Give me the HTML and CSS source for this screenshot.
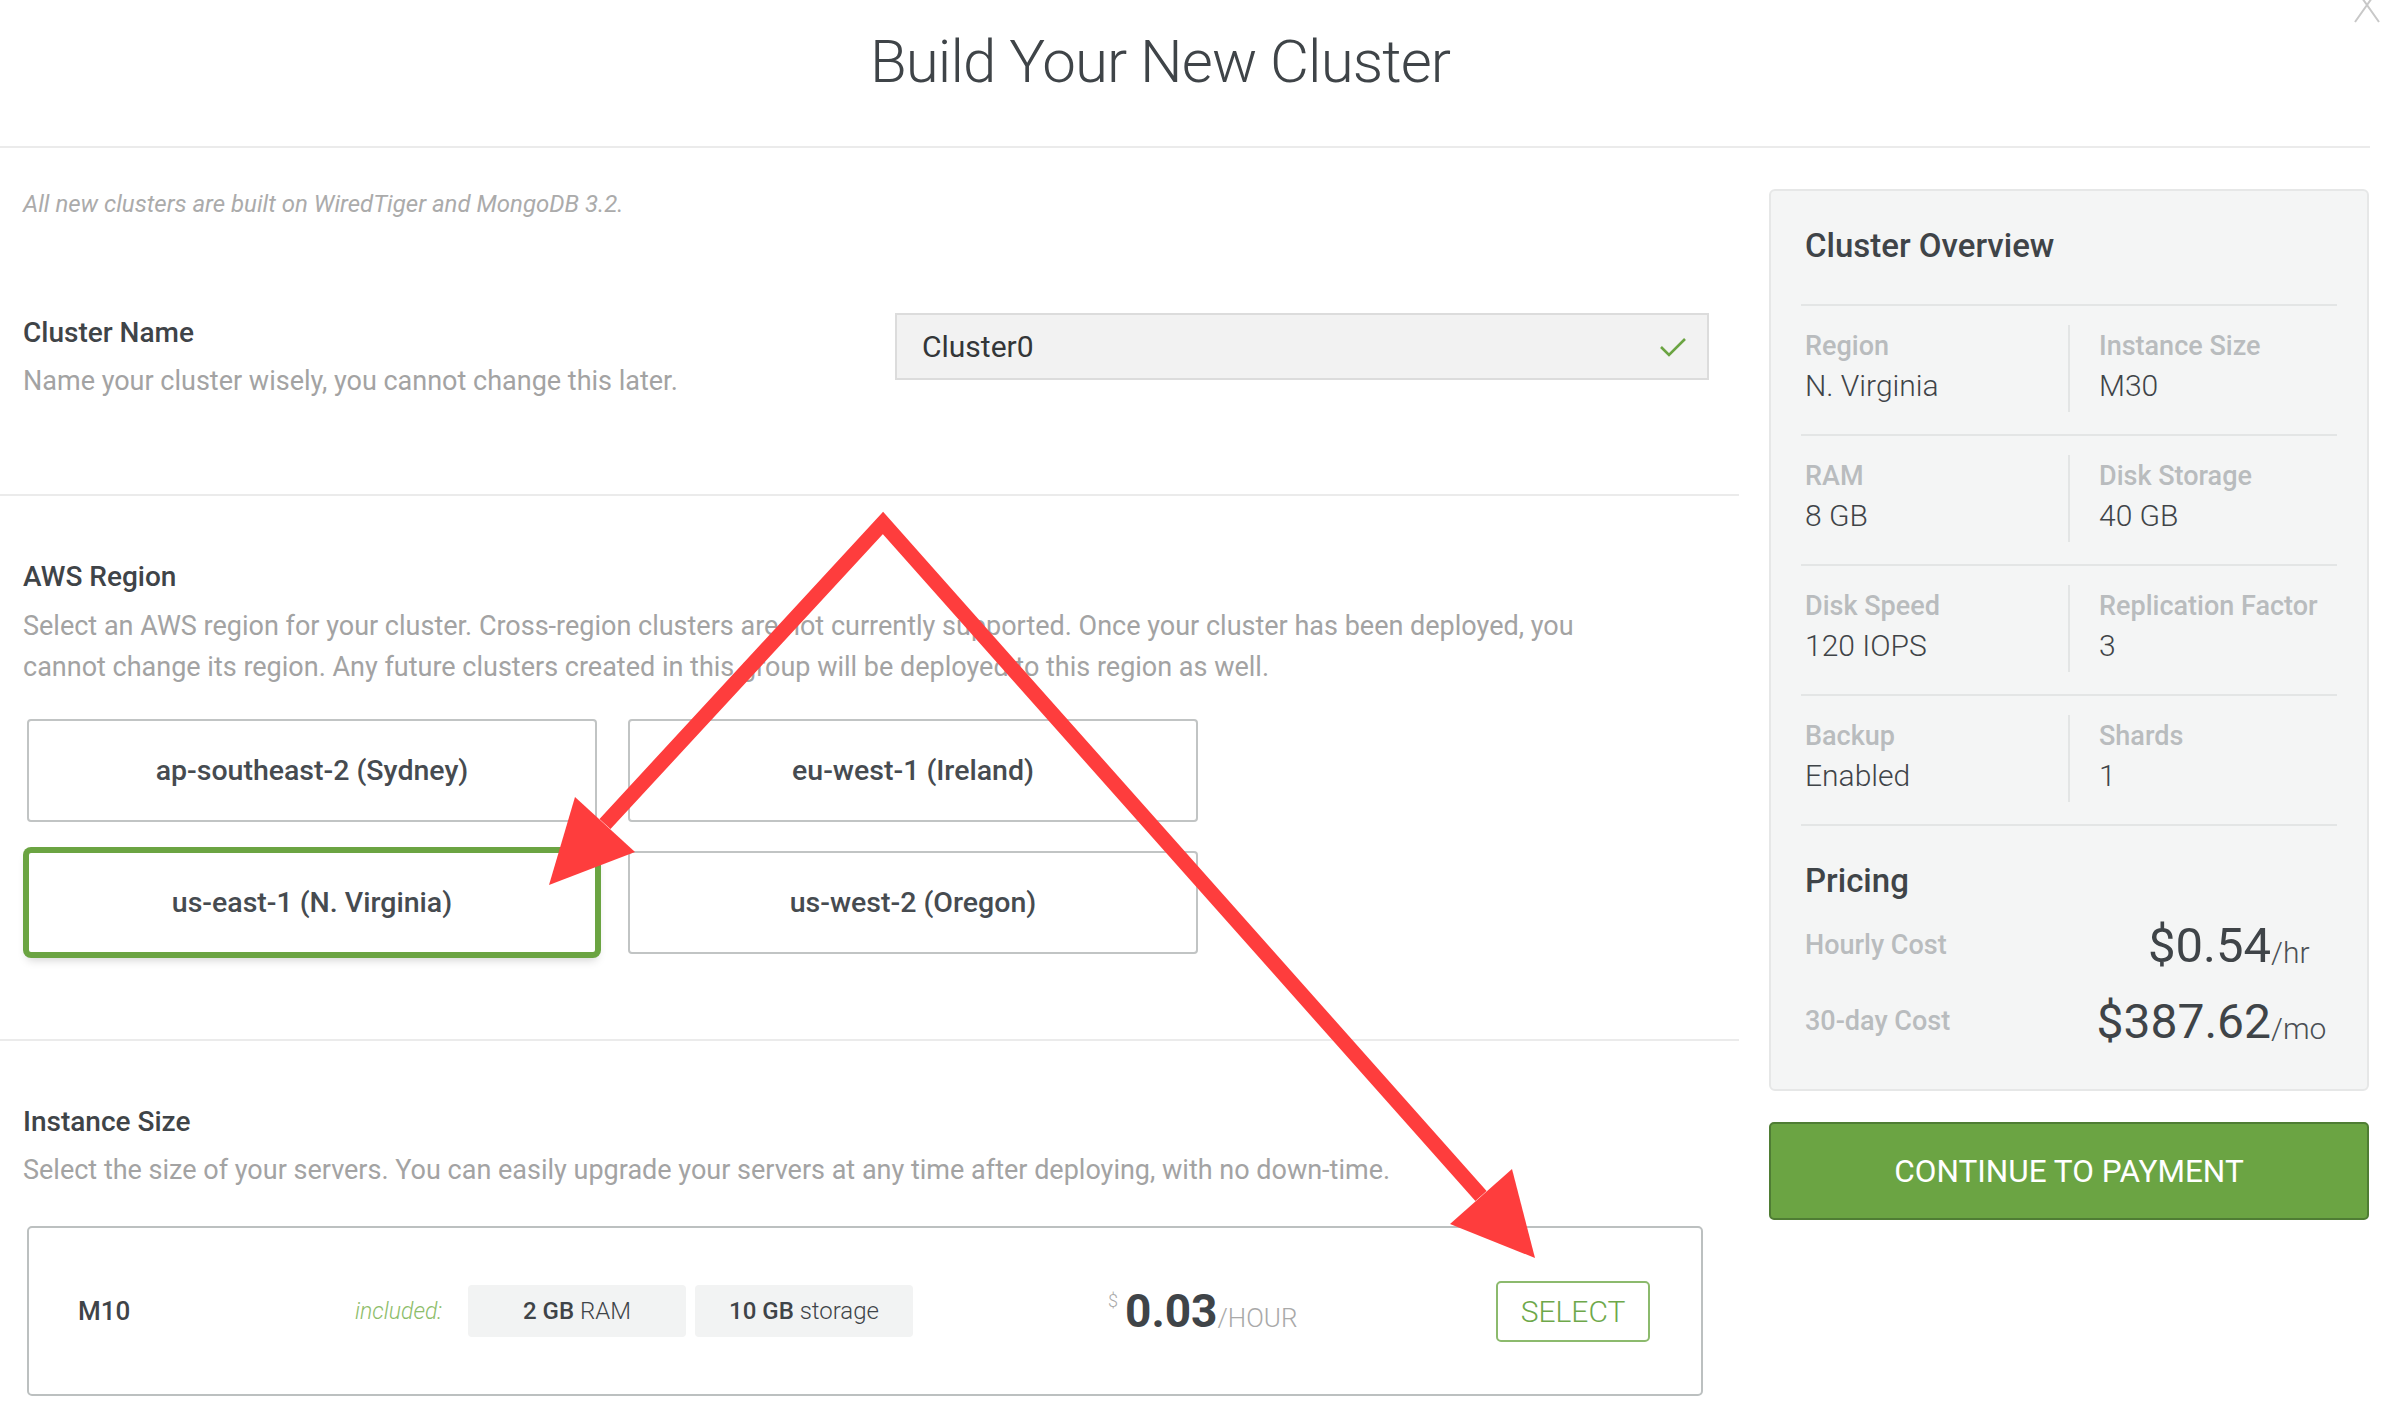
FILE: index.html
```html
<!DOCTYPE html>
<html lang="en">
<head>
<meta charset="utf-8">
<title>Build Your New Cluster</title>
<link rel="stylesheet" href="styles.css">
</head>
<body>
<div class="page">
  <header class="header">
    <h1 class="title">Build Your New Cluster</h1>
  </header>

  <div class="main">
    <div class="left">
      <section class="sec sec-name">
        <p class="note">All new clusters are built on WiredTiger and MongoDB 3.2.</p>
        <div class="name-row">
          <div class="name-text">
            <h2 class="sec-title first">Cluster Name</h2>
            <p class="sec-desc">Name your cluster wisely, you cannot change this later.</p>
          </div>
          <div class="name-input">
            <span class="name-value">Cluster0</span>
            <svg class="check" width="28" height="20" viewBox="0 0 28 20"><path d="M2 10 L10 18 L26 2" fill="none" stroke="#6ba442" stroke-width="2.6"/></svg>
          </div>
        </div>
      </section>

      <section class="sec sec-region">
        <h2 class="sec-title">AWS Region</h2>
        <p class="sec-desc">Select an AWS region for your cluster. Cross-region clusters are not currently supported. Once your cluster has been deployed, you<br>cannot change its region. Any future clusters created in this group will be deployed to this region as well.</p>
        <div class="regions">
          <div class="region">ap-southeast-2 (Sydney)</div>
          <div class="region">eu-west-1 (Ireland)</div>
          <div class="region selected">us-east-1 (N. Virginia)</div>
          <div class="region">us-west-2 (Oregon)</div>
        </div>
      </section>

      <section class="sec sec-size">
        <h2 class="sec-title">Instance Size</h2>
        <p class="sec-desc">Select the size of your servers. You can easily upgrade your servers at any time after deploying, with no down-time.</p>
        <div class="instance">
          <div class="inst-name">M10</div>
          <div class="inst-included">included:</div>
          <div class="pill"><b>2 GB</b>&nbsp;RAM</div>
          <div class="pill"><b>10 GB</b>&nbsp;storage</div>
          <div class="inst-price"><span class="cur">$</span><span class="amt">0.03</span><span class="per">/HOUR</span></div>
          <button class="select-btn">SELECT</button>
        </div>
      </section>
    </div>

    <aside class="right">
      <div class="panel">
        <h3 class="panel-title">Cluster Overview</h3>
        <div class="ov-row">
          <div class="ov-cell"><div class="ov-label">Region</div><div class="ov-value">N. Virginia</div></div>
          <div class="ov-cell second"><div class="ov-label">Instance Size</div><div class="ov-value">M30</div></div>
        </div>
        <div class="ov-row">
          <div class="ov-cell"><div class="ov-label">RAM</div><div class="ov-value">8 GB</div></div>
          <div class="ov-cell second"><div class="ov-label">Disk Storage</div><div class="ov-value">40 GB</div></div>
        </div>
        <div class="ov-row">
          <div class="ov-cell"><div class="ov-label">Disk Speed</div><div class="ov-value">120 IOPS</div></div>
          <div class="ov-cell second"><div class="ov-label">Replication Factor</div><div class="ov-value">3</div></div>
        </div>
        <div class="ov-row">
          <div class="ov-cell"><div class="ov-label">Backup</div><div class="ov-value">Enabled</div></div>
          <div class="ov-cell second"><div class="ov-label">Shards</div><div class="ov-value">1</div></div>
        </div>
        <div class="pricing">
          <h3 class="panel-title">Pricing</h3>
          <div class="price-row">
            <div class="price-label">Hourly Cost</div>
            <div class="price-num hr">$0.54</div>
            <div class="price-unit">/hr</div>
          </div>
          <div class="price-row">
            <div class="price-label">30-day Cost</div>
            <div class="price-num mo">$387.62</div>
            <div class="price-unit">/mo</div>
          </div>
        </div>
      </div>
      <button class="continue-btn">CONTINUE TO PAYMENT</button>
    </aside>
  </div>

  <svg class="close" width="30" height="36" viewBox="0 0 30 36"><path d="M3 0 L27 34 M27 0 L3 34" stroke="#c8c8c8" stroke-width="2" fill="none"/></svg>

  <svg class="arrows" width="2389" height="1405" viewBox="0 0 2389 1405">
    <polyline points="605,824 883,523 1481,1196" fill="none" stroke="#fe3d3d" stroke-width="15" stroke-linejoin="miter"/>
    <polygon points="549,885 575,797 635,852" fill="#fe3d3d"/>
    <polygon points="1535,1258 1512,1169 1450,1224" fill="#fe3d3d"/>
  </svg>
</div>
</body>
</html>
```

FILE: styles.css
```css
* {
  box-sizing: border-box;
  margin: 0;
  padding: 0;
}

body {
  margin: 0;
  background: #ffffff;
  font-family: Roboto, "Liberation Sans", Arial, sans-serif;
  color: #3f4448;
}

.page {
  position: relative;
  width: 2389px;
  height: 1405px;
  overflow: hidden;
}

/* Header */
.header {
  width: 2370px;
  height: 148px;
  border-bottom: 2px solid #ebebeb;
}

.title {
  width: 2320px;
  padding-top: 26px;
  text-align: center;
  font-weight: 300;
  font-size: 60px;
  line-height: 72px;
  letter-spacing: -0.9px;
  color: #3f4448;
}

.main {
  display: flex;
  gap: 30px;
}

/* Left column */
.left {
  width: 1739px;
}

.sec {
  padding-left: 23px;
  border-bottom: 2px solid #ebebeb;
}

.sec-size {
  border-bottom: none;
}

.note {
  margin-top: 42px;
  font-size: 24px;
  line-height: 28px;
  font-style: italic;
  font-weight: 400;
  color: #ababab;
}

.name-row {
  display: flex;
  align-items: flex-start;
  margin-top: 95px;
  padding-bottom: 92px;
}

.name-text {
  flex: 1;
}

.sec-title {
  font-size: 28px;
  line-height: 32px;
  font-weight: 500;
  color: #3f4448;
}

.sec-title.first {
  margin-top: 4px;
}

.sec-desc {
  margin-top: 12px;
  font-size: 27px;
  line-height: 41px;
  font-weight: 400;
  color: #a3a3a3;
}

.name-input {
  display: flex;
  align-items: center;
  justify-content: space-between;
  width: 814px;
  height: 67px;
  margin-right: 30px;
  padding: 0 20px 0 25px;
  background: #f2f2f2;
  border: 2px solid #dcdcdc;
}

.name-value {
  font-size: 30px;
  line-height: 36px;
  color: #333638;
}

.sec-region {
  padding-top: 65px;
  padding-bottom: 85px;
}

.sec-region .sec-desc {
  margin-top: 13px;
}

.regions {
  display: grid;
  grid-template-columns: 570px 570px;
  grid-template-rows: 103px 103px;
  column-gap: 31px;
  row-gap: 29px;
  margin-top: 31px;
  margin-left: 4px;
}

.region {
  display: flex;
  align-items: center;
  justify-content: center;
  border: 2px solid #c1c4c4;
  border-radius: 4px;
  background: #fff;
  font-size: 28.5px;
  font-weight: 500;
  color: #464b50;
}

.region.selected {
  border-color: #6ba442;
  box-shadow: 0 0 0 4px #6ba442, 0 6px 10px rgba(0, 0, 0, 0.18);
}

.sec-size {
  padding-top: 65px;
}

.instance {
  display: flex;
  align-items: center;
  width: 1676px;
  height: 170px;
  margin-top: 35px;
  margin-left: 4px;
  padding: 0 51px 0 49px;
  border: 2px solid #bcc0c0;
  border-radius: 5px;
}

.inst-name {
  width: 277px;
  font-size: 26px;
  font-weight: 500;
  color: #3f4448;
}

.inst-included {
  width: 113px;
  font-size: 23px;
  font-style: italic;
  font-weight: 300;
  color: #8dbd6a;
}

.pill {
  display: flex;
  align-items: center;
  justify-content: center;
  width: 218px;
  height: 52px;
  margin-right: 9px;
  background: #f2f3f3;
  border-radius: 4px;
  font-size: 24px;
  font-weight: 300;
  color: #3f4448;
}

.pill b {
  font-weight: 500;
}

.inst-price {
  display: flex;
  align-items: flex-end;
  margin-left: 186px;
}

.cur {
  align-self: flex-start;
  margin-top: 2px;
  margin-right: 7px;
  font-size: 18px;
  font-weight: 300;
  color: #a9a9a9;
}

.amt {
  font-size: 46px;
  line-height: 46px;
  font-weight: 700;
  color: #3f4448;
}

.per {
  font-size: 26px;
  line-height: 32px;
  font-weight: 300;
  color: #a9a9a9;
}

.select-btn {
  margin-left: auto;
  width: 154px;
  height: 61px;
  background: #fff;
  border: 2px solid #8cba6d;
  border-radius: 5px;
  font-family: Roboto, "Liberation Sans", Arial, sans-serif;
  font-size: 30px;
  font-weight: 300;
  color: #6ea84a;
}

/* Right column */
.right {
  width: 600px;
  padding-top: 41px;
}

.panel {
  background: #f4f5f5;
  border: 2px solid #e6e7e7;
  border-radius: 6px;
  padding: 37px 30px 30px 30px;
}

.panel-title {
  padding-left: 4px;
  margin-bottom: 40px;
  font-size: 33px;
  line-height: 36px;
  font-weight: 500;
  color: #3f4448;
}

.ov-row {
  display: flex;
  border-top: 2px solid #e3e5e5;
  padding: 19px 0 22px 0;
}

.ov-cell {
  width: 267px;
  height: 87px;
  padding: 6px 0 0 4px;
}

.ov-cell.second {
  flex: 1;
  border-left: 2px solid #e3e5e5;
  padding-left: 29px;
}

.ov-label {
  font-size: 27px;
  line-height: 30px;
  font-weight: 500;
  color: #b9bcbe;
}

.ov-value {
  margin-top: 7px;
  font-size: 30px;
  line-height: 36px;
  font-weight: 300;
  color: #3f4448;
}

.pricing {
  border-top: 2px solid #e3e5e5;
  padding-top: 37px;
}

.pricing .panel-title {
  margin-bottom: 8px;
}

.price-row {
  display: flex;
  align-items: center;
  height: 76px;
  padding-left: 4px;
}

.price-label {
  flex: 1;
  font-size: 27px;
  font-weight: 500;
  color: #b9bcbe;
}

.price-num {
  font-weight: 400;
  color: #3f4448;
  text-align: right;
}

.price-num.hr {
  font-size: 49px;
}

.price-num.mo {
  font-size: 48px;
}

.price-unit {
  width: 66px;
  padding-top: 14px;
  font-size: 30px;
  font-weight: 300;
  color: #4a4f54;
}

.continue-btn {
  display: block;
  width: 600px;
  height: 98px;
  margin-top: 31px;
  background: #6ba443;
  border: 2px solid #4f7d34;
  border-radius: 5px;
  font-family: Roboto, "Liberation Sans", Arial, sans-serif;
  font-size: 31.5px;
  font-weight: 400;
  color: #ffffff;
}

/* Overlays */
.close {
  position: absolute;
  left: 2352px;
  top: -12px;
}

.arrows {
  position: absolute;
  left: 0;
  top: 0;
  pointer-events: none;
}
```
